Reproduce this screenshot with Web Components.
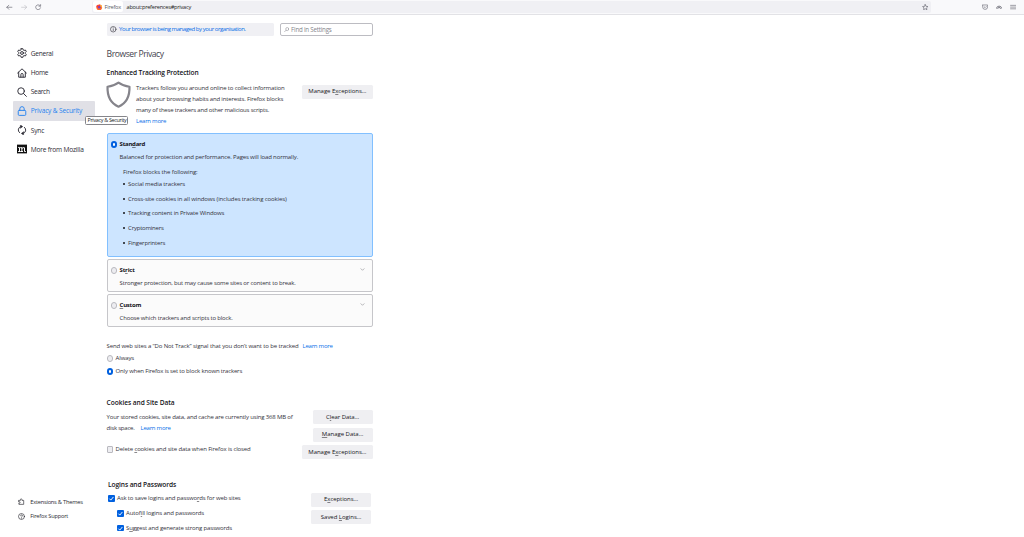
<!DOCTYPE html>
<html lang="en">
<head>
<meta charset="utf-8">
<title>Settings</title>
<style>
  body {
    margin: 0;
    height: 537px;
    overflow: hidden;
    background: #fff;
    color: #33323b;
    font: 6px/10.8px "Open Sans", "Noto Sans", sans-serif;
  }
</style>
</head>
<body>
<settings-page></settings-page>

<script>
class BaseElement extends HTMLElement {
  constructor() {
    super();
    const template = document.createElement('template');
    template.innerHTML = this.constructor.markup;
    this.attachShadow({ mode: 'open' }).appendChild(template.content.cloneNode(true));
  }
}

// Text set to a given width by adjusting its tracking.
class FitText extends BaseElement {
  static markup = `
    <style>
      :host { display: inline-block; white-space: nowrap; }
      :host([bold]) { font-weight: 700; color: #15141a; }
      :host([link]) { color: #0a6fe8; }
    </style>
    <slot></slot>
  `;

  connectedCallback() {
    const target = Number(this.getAttribute('w'));
    const length = this.textContent.length;
    if (!target || !length) return;
    this.style.letterSpacing = '0';
    const natural = this.getBoundingClientRect().width;
    this.style.letterSpacing = `${(target - natural) / length}px`;
  }
}

class UiIcon extends BaseElement {
  static markup = `
    <style>
      :host { display: block; flex: none; width: 10px; height: 10px; }
      svg { display: block; width: 100%; height: 100%; fill: none; stroke: currentColor; stroke-width: 1.5; stroke-linecap: round; stroke-linejoin: round; }
    </style>
    <svg viewBox="0 0 16 16"></svg>
  `;

  static shapes = {
    back: '<path d="M14.5 8H2M7 3L2 8l5 5"/>',
    forward: '<path d="M1.5 8H14M9 3l5 5-5 5"/>',
    reload: '<path d="M13.6 9.5A6 6 0 1 1 12.3 4M13.8 1.5v4h-4"/>',
    star: '<path d="M8 1.5l2 4.2 4.6.6-3.4 3.2.9 4.6L8 11.8l-4.1 2.3.9-4.6L1.4 6.3 6 5.7z"/>',
    pocket: '<path d="M1.5 2.5h13v5a6.5 6.5 0 0 1-13 0zM5 6.5l3 3 3-3"/>',
    account: '<path d="M1 11a7.2 7.2 0 0 1 14 0M4.500 11.500a3.600 3.600 0 0 1 7 0" stroke-width="2"/>',
    menu: '<path d="M1.5 3.5h13M1.5 8h13M1.5 12.5h13"/>',
    firefox: '<circle cx="8" cy="8.5" r="7" fill="#ff6a2b" stroke="none"/><path d="M1 8C1 5 2 3 3 2l2 2 4-3c3 1 6 4 6 8z" fill="#f43d3c" stroke="none"/><path d="M10 2c3 1 5 4 5 7l-4-2z" fill="#ffc933" stroke="none"/><circle cx="8" cy="8" r="3" fill="#7542c8" stroke="none"/>',
    info: '<circle cx="8" cy="8" r="6.8"/><path d="M8 7.5v4M8 4.5v.2"/>',
    find: '<circle cx="9.5" cy="6" r="4.5"/><path d="M6 9.5L1.5 14"/>',
    gear: '<path d="M6.7 1h2.6l.5 2 1.5.9 2.1-.7 1.4 2.3-1.5 1.5v2l1.5 1.5-1.4 2.3-2.1-.7-1.5.9-.5 2H6.7l-.5-2-1.5-.9-2.1.7-1.4-2.3L2.7 9V7L1.2 5.5l1.4-2.3 2.1.7L6.2 3z"/><circle cx="8" cy="8" r="2.3"/>',
    home: '<path d="M1 8l7-6.7L15 8M2.7 6.7V14.7h10.6V6.7M6.2 14.5v-4a1.8 1.8 0 0 1 3.6 0v4"/>',
    search: '<circle cx="6.5" cy="6.5" r="5.3"/><path d="M10.5 10.5L15 15"/>',
    lock: '<rect x="2" y="7" width="12" height="8" rx="1.5"/><path d="M4.5 7V4.5a3.5 3.5 0 0 1 7 0V7"/>',
    sync: '<path d="M6.5 2.5A5.6 5.6 0 0 0 4 12.2M9.5 13.5A5.6 5.6 0 0 0 12 3.8"/><path d="M6 .5l3 2-3 2.3zM10 11.2l-3 2.3 3 2z" fill="currentColor" stroke-width="1"/>',
    mozilla: '<rect x="0" y="1" width="16" height="14" fill="#111" stroke="none"/><path d="M2.5 5.5H4V12M2.5 12h3M4 7q1.5-2 3.8-1.2V12M7.8 7q2-2 4.2-1V12h1.5M7 12h2" stroke="#fff" stroke-width="1.6"/>',
    extension: '<path d="M2 5.5h3.5V3.7a1.8 1.8 0 0 1 3.6 0v1.8H13v9H2v-3h1.5a1.5 1.5 0 0 0 0-3H2z"/>',
    help: '<circle cx="8" cy="8" r="6.8"/><path d="M6 6.3a2 2 0 1 1 2.9 1.8Q8 8.6 8 9.5M8 11.8v.2"/>',
    shield: '<path d="M8 1C6 2.5 3.5 3.2 1.5 3.4 1.3 9 3 13 8 15.2 13 13 14.7 9 14.5 3.4 12.5 3.2 10 2.5 8 1z" stroke-width="1.3"/>',
    chevron: '<path d="M3 5.5l5 5 5-5"/>',
  };

  connectedCallback() {
    this.shadowRoot.querySelector('svg').innerHTML = UiIcon.shapes[this.getAttribute('name')] || '';
  }
}

class BrowserToolbar extends BaseElement {
  static markup = `
    <style>
      :host { display: flex; align-items: center; box-sizing: border-box; height: 14.5px; background: #f9f9fb; border-bottom: 1px solid #e2e2e6; color: #5b5b66; font-size: 5.6px; }
      ui-icon { width: 6.5px; height: 6.5px; }
      .nav { display: flex; gap: 8px; width: 86px; padding-left: 6px; box-sizing: border-box; }
      .nav ui-icon:nth-child(2) { color: #b9b9bf; }
      .url { display: flex; align-items: center; box-sizing: border-box; width: 839px; height: 12px; margin-left: 6px; padding: 0 3px 0 1px; background: #f0f0f4; border-radius: 2px; }
      .identity { display: flex; align-items: center; gap: 2px; box-sizing: border-box; width: 30px; height: 11px; padding-left: 3px; margin-right: 3.5px; background: #fff; border-radius: 2px; }
      .url fit-text { margin-top: 1px; }
      .star { margin-left: auto; }
      .tools { display: flex; gap: 8px; margin-left: 51px; }
      .tools ui-icon { width: 6.2px; height: 6.2px; }
    </style>
    <div class="nav"><ui-icon name="back"></ui-icon><ui-icon name="forward"></ui-icon><ui-icon name="reload"></ui-icon></div>
    <div class="url">
      <div class="identity"><ui-icon name="firefox"></ui-icon><fit-text w="16.5">Firefox</fit-text></div>
      <fit-text w="64.5" style="color:#222">about:preferences#privacy</fit-text>
      <ui-icon class="star" name="star"></ui-icon>
    </div>
    <div class="tools"><ui-icon name="pocket"></ui-icon><ui-icon name="account"></ui-icon><ui-icon name="menu"></ui-icon></div>
  `;
}

class NavItem extends BaseElement {
  static markup = `
    <style>
      :host { display: flex; align-items: center; gap: 3.5px; box-sizing: border-box; width: 82px; height: 19.2px; padding-left: 4px; font-size: 6.6px; color: #2b2a33; border-radius: 1px; }
      :host([selected]) { background: #e0e0e6; color: #2482f0; }
      :host([small]) { height: 14.6px; gap: 5.5px; padding-left: 4.5px; font-size: 5.7px; }
      :host([small]) ui-icon { width: 7px; height: 7px; }
      ::slotted(fit-text) { padding-top: 1px; }
    </style>
    <ui-icon></ui-icon><slot></slot>
  `;

  connectedCallback() {
    const icon = this.shadowRoot.querySelector('ui-icon');
    icon.setAttribute('name', this.getAttribute('icon'));
    icon.connectedCallback();
  }
}

class SideNav extends BaseElement {
  static markup = `
    <style>
      :host { position: relative; display: flex; flex: none; flex-direction: column; box-sizing: border-box; width: 106.6px; padding: 29.3px 0 13.5px 13.2px; }
      .bottom { margin-top: auto; }
      .tip { position: absolute; left: 85px; top: 101.5px; box-sizing: border-box; width: 43px; height: 9px; padding-left: 1.5px; border: 1px solid #85858a; border-radius: 1.5px; background: #fff; color: #222; font-size: 5.4px; line-height: 7.5px; }
      nav-item:not([small]) fit-text { padding-top: 1.6px; }
    </style>
    <nav-item icon="gear"><fit-text w="22.5">General</fit-text></nav-item>
    <nav-item icon="home"><fit-text w="17.5">Home</fit-text></nav-item>
    <nav-item icon="search"><fit-text w="19">Search</fit-text></nav-item>
    <nav-item icon="lock" selected><fit-text w="51.5">Privacy &amp; Security</fit-text></nav-item>
    <nav-item icon="sync"><fit-text w="13.5">Sync</fit-text></nav-item>
    <nav-item icon="mozilla"><fit-text w="53">More from Mozilla</fit-text></nav-item>
    <div class="bottom">
      <nav-item small icon="extension"><fit-text w="52.5">Extensions &amp; Themes</fit-text></nav-item>
      <nav-item small icon="help"><fit-text w="38">Firefox Support</fit-text></nav-item>
    </div>
    <div class="tip"><fit-text w="39">Privacy &amp; Security</fit-text></div>
  `;
}

class UiButton extends BaseElement {
  static markup = `
    <style>
      :host { display: flex; align-items: center; justify-content: center; flex: none; width: 60px; height: 14px; background: #efeff2; color: #15141a; border-radius: 1.5px; font-weight: 500; }
      :host([wide]) { width: 70.5px; }
    </style>
    <slot></slot>
  `;
}

class UiChoice extends BaseElement {
  static markup = `
    <style>
      :host { display: flex; align-items: center; gap: 2.2px; height: 13px; }
      .mark { box-sizing: border-box; flex: none; width: 6.8px; height: 6.8px; border: 1px solid #b9b9bf; background: #ededf1; }
      :host([type=radio]) .mark { border-radius: 50%; }
      :host([type=radio][checked]) .mark { border: 2px solid #0060df; background: #fff; }
      :host([type=check]) .mark { border-radius: 1px; }
      :host([type=check][checked]) .mark { background: #0060df; border: 0; }
      svg { display: none; width: 100%; height: 100%; fill: none; stroke: #fff; stroke-width: 1.6; }
      :host([type=check][checked]) svg { display: block; }
    </style>
    <span class="mark"><svg viewBox="0 0 12 12"><path d="M2.5 6.5l2.5 2.5 4.5-5.5"/></svg></span>
    <slot></slot>
  `;
}

class BlockingCard extends BaseElement {
  static markup = `
    <style>
      :host { position: relative; display: block; box-sizing: border-box; width: 266px; height: 33px; padding: 3.5px 3px 0 3px; margin-bottom: 1.8px; border: 1px solid #c6c6ca; border-radius: 2px; background: #fbfbfb; }
      :host([selected]) { height: 124px; padding-top: 4px; margin-bottom: 2.2px; border-color: #82c0ff; background: #cde5ff; }
      .body { padding-left: 9px; line-height: 12px; }
      ui-icon { position: absolute; right: 6.5px; top: 6.5px; width: 5px; height: 5px; color: #66666e; }
      :host([selected]) ui-icon { display: none; }
    </style>
    <slot name="title"></slot>
    <div class="body"><slot></slot></div>
    <ui-icon name="chevron"></ui-icon>
  `;
}

class SettingsPage extends BaseElement {
  static markup = `
    <style>
      :host { display: flex; flex-direction: column; height: 537px; }
      u { text-underline-offset: 0.5px; text-decoration-thickness: 0.5px; text-decoration-color: #15141a80; }
      .columns { display: flex; flex: 1; min-height: 0; }
      main { width: 266px; padding-top: 8.5px; }
      .row { display: flex; justify-content: space-between; align-items: flex-start; }
      .banner { display: flex; align-items: center; gap: 2.5px; box-sizing: border-box; width: 167px; height: 12.5px; padding-left: 3.5px; background: #f0f0f4; border-radius: 1.5px; }
      .banner ui-icon { width: 6.5px; height: 6.5px; }
      .banner fit-text { padding-top: 0.8px; }
      .find { display: flex; align-items: center; gap: 2px; box-sizing: border-box; width: 93px; height: 13px; padding-left: 3px; border: 1px solid #bcbcc2; border-radius: 2px; color: #85858c; font-size: 6.2px; }
      .find fit-text { padding-top: 0.8px; }
      .find ui-icon { width: 5.5px; height: 5.5px; }
      h1 { margin: 10.8px 0 0; height: 15px; font-size: 8.6px; line-height: 15.6px; font-weight: 400; color: #45444e; }
      h2 { margin: 4.2px 0 0; height: 14px; font-size: 6.6px; line-height: 14.8px; font-weight: 600; color: #15141a; }
      .tracking { height: 43.2px; margin: 3.5px 0 6.5px; }
      .shield { width: 27px; height: 27px; margin: -2px 0 0 -1.3px; color: #85848b; }
      .copy { flex: 1; margin-left: 3.8px; }
      .copy fit-text, .stored fit-text { vertical-align: top; }
      .tracking ui-button { margin-top: 1.3px; }
      ul { margin: 0; padding: 0; list-style: none; }
      li { display: flex; align-items: center; gap: 3px; height: 14.6px; }
      li::before { content: ""; width: 2px; height: 2px; border-radius: 50%; background: #15141a; }
      .list { padding: 3px 0 0 3.5px; }
      .list ul { margin-top: -1.3px; }
      .dnt { margin-top: 13px; height: 12.5px; line-height: 13px; }
      .dnt + ui-choice { height: 11px; }
      .dnt + ui-choice + ui-choice { height: 16px; }
      h2.cookies { margin-top: 16px; }
      .stored { box-sizing: border-box; width: 190px; padding-top: 2.5px; }
      .stored ui-choice { margin-top: 9px; }
      .buttons { display: flex; flex-direction: column; align-items: flex-end; gap: 3.6px; padding-top: 0.5px; }
      .logins { margin-top: 19px; padding: 0 1.5px; }
      .logins ui-choice { height: 14.7px; }
      .logins .saving { margin-top: -1px; }
      .nested { margin-left: 9px; }
    </style>
    <browser-toolbar></browser-toolbar>
    <div class="columns">
      <side-nav></side-nav>
      <main>
        <div class="row">
          <div class="banner"><ui-icon name="info"></ui-icon><fit-text link w="126.5">Your browser is being managed by your organisation.</fit-text></div>
          <div class="find"><ui-icon name="find"></ui-icon><fit-text w="40.5">Find in Settings</fit-text></div>
        </div>
        <h1><fit-text w="57">Browser Privacy</fit-text></h1>
        <h2><fit-text w="92">Enhanced Tracking Protection</fit-text></h2>
        <div class="row tracking">
          <ui-icon class="shield" name="shield"></ui-icon>
          <div class="copy">
            <fit-text w="148.5">Trackers follow you around online to collect information</fit-text><br>
            <fit-text w="147">about your browsing habits and interests. Firefox blocks</fit-text><br>
            <fit-text w="133">many of these trackers and other malicious scripts.</fit-text><br>
            <fit-text link w="30">Learn more</fit-text>
          </div>
          <ui-button wide><fit-text w="58">Manage E<u>x</u>ceptions…</fit-text></ui-button>
        </div>

        <blocking-card selected>
          <ui-choice slot="title" type="radio" checked><fit-text bold w="25.5">Stan<u>d</u>ard</fit-text></ui-choice>
          <fit-text w="178.5">Balanced for protection and performance. Pages will load normally.</fit-text>
          <div class="list">
            <fit-text w="74.5">Firefox blocks the following:</fit-text>
            <ul>
              <li><fit-text w="57">Social media trackers</fit-text></li>
              <li><fit-text w="158.5">Cross-site cookies in all windows (includes tracking cookies)</fit-text></li>
              <li><fit-text w="96">Tracking content in Private Windows</fit-text></li>
              <li><fit-text w="35.5">Cryptominers</fit-text></li>
              <li><fit-text w="37">Fingerprinters</fit-text></li>
            </ul>
          </div>
        </blocking-card>
        <blocking-card>
          <ui-choice slot="title" type="radio"><fit-text bold w="15">St<u>r</u>ict</fit-text></ui-choice>
          <fit-text w="176">Stronger protection, but may cause some sites or content to break.</fit-text>
        </blocking-card>
        <blocking-card>
          <ui-choice slot="title" type="radio"><fit-text bold w="21.5"><u>C</u>ustom</fit-text></ui-choice>
          <fit-text w="113">Choose which trackers and scripts to block.</fit-text>
        </blocking-card>

        <div class="dnt"><fit-text w="192">Send web sites a “Do Not Track” signal that you don’t want to be tracked</fit-text><fit-text link w="30" style="margin-left:4px">Learn more</fit-text></div>
        <ui-choice type="radio"><fit-text w="18.5">Always</fit-text></ui-choice>
        <ui-choice type="radio" checked><fit-text w="126.5">Only when Firefox is set to block known trackers</fit-text></ui-choice>

        <h2 class="cookies"><fit-text w="68">Cookies and Site Data</fit-text></h2>
        <div class="row">
          <div class="stored">
            <fit-text w="186">Your stored cookies, site data, and cache are currently using 368 MB of</fit-text><br>
            <fit-text w="28">disk space.</fit-text><fit-text link w="30" style="margin-left:6px">Learn more</fit-text>
            <ui-choice type="check"><fit-text w="135">Delete <u>c</u>ookies and site data when Firefox is closed</fit-text></ui-choice>
          </div>
          <div class="buttons">
            <ui-button><fit-text w="33">C<u>l</u>ear Data…</fit-text></ui-button>
            <ui-button><fit-text w="41.5"><u>M</u>anage Data…</fit-text></ui-button>
            <ui-button wide><fit-text w="58">Manage E<u>x</u>ceptions…</fit-text></ui-button>
          </div>
        </div>

        <div class="logins">
          <h2><fit-text w="68">Logins and Passwords</fit-text></h2>
          <div class="row">
            <div class="saving">
              <ui-choice type="check" checked><fit-text w="123.5">Ask to save logins and passwo<u>r</u>ds for web sites</fit-text></ui-choice>
              <ui-choice class="nested" type="check" checked><fit-text w="78">Autof<u>i</u>ll logins and passwords</fit-text></ui-choice>
              <ui-choice class="nested" type="check" checked><fit-text w="106">S<u>u</u>ggest and generate strong passwords</fit-text></ui-choice>
            </div>
            <div class="buttons">
              <ui-button><fit-text w="34">E<u>x</u>ceptions…</fit-text></ui-button>
              <ui-button><fit-text w="40.5">Saved <u>L</u>ogins…</fit-text></ui-button>
            </div>
          </div>
        </div>
      </main>
    </div>
  `;
}

customElements.define('fit-text', FitText);
customElements.define('ui-icon', UiIcon);
customElements.define('browser-toolbar', BrowserToolbar);
customElements.define('nav-item', NavItem);
customElements.define('side-nav', SideNav);
customElements.define('ui-button', UiButton);
customElements.define('ui-choice', UiChoice);
customElements.define('blocking-card', BlockingCard);
customElements.define('settings-page', SettingsPage);
</script>
</body>
</html>
